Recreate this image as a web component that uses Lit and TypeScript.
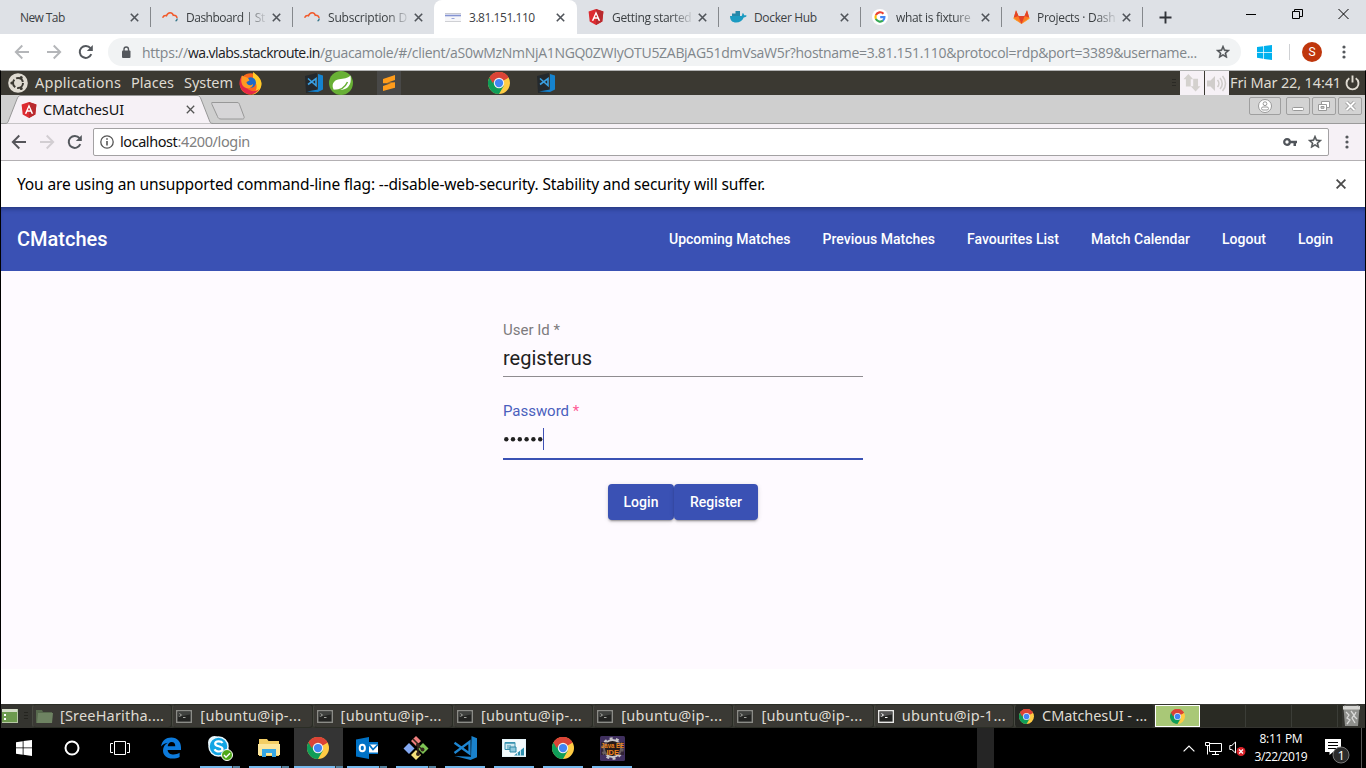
import { LitElement, html, css, svg, nothing } from "lit";
import { customElement, property } from "lit/decorators.js";

/** A single-line label whose tracking is computed so that it spans a given width. */
@customElement("fit-label")
class FitLabel extends LitElement {
  @property({ type: Number }) w = 0;
  static styles = css`
    :host { display: inline-block; white-space: pre; flex: none; }
    .in { display: inline-block; }
  `;
  render() { return html`<span class="in"><slot></slot></span>`; }
  async firstUpdated() {
    await document.fonts.ready;
    const el = this.renderRoot.querySelector(".in") as HTMLElement;
    const n = (this.textContent ?? "").length;
    const natural = el.getBoundingClientRect().width;
    if (this.w && n > 1) {
      el.style.letterSpacing = `${(this.w - natural) / (n - 0.5)}px`;
      this.style.width = `${this.w}px`;
    }
  }
}

const icon = (w: number, h: number, vb: string, body: unknown) =>
  html`<svg class="ic" width=${w} height=${h} viewBox=${vb}>${body}</svg>`;

const close = icon(9, 9, "0 0 9 9", svg`<path d="M.8 .8 8.2 8.2M8.2 .8 .8 8.2" stroke="#50545a" stroke-width="1.6"/>`);
const back = (c: string) => icon(16, 16, "0 0 16 16", svg`<path d="M15 8H2M8.300 1.500 1.800 8l6.500 6.500" fill="none" stroke=${c} stroke-width="1.900"/>`);
const fwd = (c: string) => icon(16, 16, "0 0 16 16", svg`<path d="M1 8h13M7.700 1.500 14.200 8l-6.500 6.500" fill="none" stroke=${c} stroke-width="1.900"/>`);
const reload = icon(16, 16, "0 0 16 16", svg`<path d="M13.300 10.200A6 6 0 1 1 12.500 4.200" fill="none" stroke="#54585d" stroke-width="2"/><path d="M14.800 1v6H8.800z" fill="#54585d"/>`);
const star = icon(16, 16, "0 0 24 24", svg`<path d="M22 9.240l-7.190-.62L12 2 9.190 8.630 2 9.240l5.460 4.730L5.820 21 12 17.270 18.180 21l-1.630-7.030zM12 15.400l-3.760 2.270 1-4.280-3.320-2.880 4.380-.38L12 6.100l1.710 4.040 4.380.38-3.320 2.880 1 4.280z" fill="#4a4d51" stroke="#4a4d51" stroke-width=".7"/>`);
const dots = icon(4, 14, "0 0 4 14", svg`<g fill="#55585c"><circle cx="2" cy="2" r="1.600"/><circle cx="2" cy="7" r="1.600"/><circle cx="2" cy="12" r="1.600"/></g>`);
const chrome = (s: number) => icon(s, s, "0 0 24 24", svg`
  <circle cx="12" cy="12" r="12" fill="#fc4"/>
  <path d="M12 12 1.600 6A12 12 0 0 1 22.400 6z" fill="#db4437"/><path d="M12 6h10.400L12 12z" fill="#db4437"/>
  <path d="M1.600 6A12 12 0 0 0 12 24l5.200-9L12 12z" fill="#0f9d58"/>
  <path d="M1.600 6 6.800 15 12 12 12 6z" fill="#0f9d58"/><path d="M1.600 6A12 12 0 0 1 22.400 6H12L7 9.500 5 11.900z" fill="#db4437"/>
  <circle cx="12" cy="12" r="5.700" fill="#f1f1f1"/><circle cx="12" cy="12" r="4.500" fill="#4285f4"/>`);
const angular = (s: number) => icon(s, s, "0 0 16 16", svg`<path d="M8 0l7.400 2.600-1.100 9.800L8 16l-6.300-3.600L.6 2.600z" fill="#dd2b31"/><path d="M8 0l7.400 2.600-1.100 9.800L8 16z" fill="#b92a2e"/><path d="M8 2.300 3.800 11.800h1.700l.8-2.100h3.400l.8 2.100h1.700zm0 3.100 1.200 2.900H6.800z" fill="#fff"/>`);
const cloud = icon(16, 16, "0 0 16 16", svg`<path d="M.6 8.800C1.600 6.500 3 6.300 4.500 6.800 6 2.500 10.300 3 11.300 6.300c2.300-.3 3.600 1 3.700 2.700" fill="none" stroke="#f1592a" stroke-width="1.500"/><path d="M15.200 9.500c0 1.400-.5 2-1.600 2.500" fill="none" stroke="#37768a" stroke-width="1.400"/>`);
const vscode = (s: number) => icon(s, s, "0 0 24 24", svg`<path d="M18.500 0l5.500 2.300v19L17.500 24 1.500 20l16.500.8z" fill="#1a82cc"/><path d="M1.500 6.800 16.500 17.500V5.800L1.500 17" fill="none" stroke="#1e86d2" stroke-width="2.300"/>`);
const vscodeDark = icon(22, 22, "0 0 22 22", svg`<path d="M2 4 14 1v19L3 21z" fill="#24292d"/><path d="M15 2l5 1.500v14L15 20l-11-.5 11-2z" fill="#1583cf"/><path d="M5 6.500l8 7v-7l-8 6" fill="none" stroke="#3aa0e2" stroke-width="1.600"/>`);
const terminal = (bright = false) => icon(16, 13, "0 0 16 13", svg`<rect x=".7" y=".7" width="14.600" height="11.600" fill="#232422" stroke=${bright ? "#e8e8e6" : "#8b8c87"} stroke-width="1.400"/><path d="M2 7l12-2.500V2H2z" fill=${bright ? "#555" : "#40423f"}/><path d="M3.500 3.500l2 1.500-2 1.500M7 7.500h2.500" fill="none" stroke=${bright ? "#fff" : "#a5a6a1"}/>`);
const docker = icon(17, 16, "0 0 17 16", svg`<path d="M0 7h11.500c1-.2.500-2.200 1.300-3 .9.600 1.300 1.500 1.200 2.300.900-.1 2 0 2.700.500-.5 1.300-1.700 1.700-3 1.700C12.300 12 9.800 13.500 6 13.500 2.500 13.500 0 11.500 0 7z" fill="#1b9ac1"/><path d="M2 4.500h8V7H2zM5.500 2H10v2.500H5.500z" fill="#2487a9"/>`);
const google = icon(16, 16, "0 0 18 18", svg`<circle cx="9" cy="9" r="9" fill="#fff"/><g fill="none" stroke-width="2.400"><path d="M12.900 5.300A5.100 5.100 0 0 0 4.400 7" stroke="#ea4335"/><path d="M4.400 6.900a5.100 5.100 0 0 0 0 4.300" stroke="#fbbc05"/><path d="M4.400 11a5.100 5.100 0 0 0 8 2" stroke="#34a853"/><path d="M12.300 13.100C13.600 12 14.100 10.700 14 9.200H9.200" stroke="#4285f4"/></g>`);
const gitlab = icon(17, 16, "0 0 17 16", svg`<path d="M8.500 15 0.600 9.200 3 1.300 5.500 7h6L14 1.300l2.400 7.900z" fill="#fc7b26"/><path d="M8.500 15 5.300 7h6.400zM.8 8.500 3 1.300 5.500 7zM16.200 8.500 14 1.300 11.500 7z" fill="#e24329"/><path d="M.8 8.500l-.3 1.200L8.500 15zM16.200 8.500l.3 1.200L8.500 15z" fill="#fca326"/>`);
const remote = icon(16, 16, "0 0 16 16", svg`<rect y="4" width="16" height="8" fill="#f6f6f9"/><path d="M0 4.500h16" stroke="#c9cad0"/><path d="M0 6.500h16" stroke="#8493d2" stroke-width="1.600"/><path d="M6.500 9.500h3" stroke="#9aa6d8"/><path d="M0 12.500h16" stroke="#cfd0d4"/>`);

const winLogo = (s: number, c: string) => icon(s, s, "0 0 16 16", svg`<path d="M0 2.200 6.700 1.200v6.300H0zM7.500 1.100 16 0v7.500H7.500zM0 8.300h6.700v6.400L0 13.700zM7.500 8.300H16V16l-8.500-1.200z" fill=${c}/>`);

const tabs = [
  { t: "New Tab", w: 45 },
  { t: "Dashboard | St", w: 79, i: cloud, fade: true },
  { t: "Subscription D", w: 79, i: cloud, fade: true },
  { t: "3.81.151.110", w: 66, i: remote, on: true },
  { t: "Getting started", w: 79.5, i: angular(16), fade: true },
  { t: "Docker Hub", w: 63, i: docker },
  { t: "what is fixture", w: 74.500, i: google, fade: true },
  { t: "Projects · Dash", w: 78.5, i: gitlab, fade: true },
];

const tasks = [
  { t: "[SreeHaritha....", w: 104, i: icon(17, 14, "0 0 17 14", svg`<path d="M0 1h6l1 2h9v11H0z" fill="#57694d"/><path d="M2 4h15l-1 10H1z" fill="#6e8362"/>`) },
  ...[0, 1, 2, 3, 4].map(() => ({ t: "[ubuntu@ip-...", w: 101, i: terminal() })),
  { t: "ubuntu@ip-1...", w: 104, i: terminal(true) },
  { t: "CMatchesUI - ...", w: 105, i: chrome(15), on: true },
];

const outlook = icon(24, 24, "0 0 24 24", svg`<path d="M12 6h11v12H12z" fill="#0072c6"/><path d="M13.500 8.500h9.500v8h-9.500z" fill="#fff"/><path d="M14 8.500l4 5 5-5" fill="none" stroke="#0072c6" stroke-width="1.700"/><path d="M1 3.500 14 1v22L1 20.500z" fill="#0072c6"/><ellipse cx="7.300" cy="12" rx="2.600" ry="3.300" fill="none" stroke="#fff" stroke-width="2"/>`);
const git = icon(26, 26, "0 0 26 26", svg`<path d="M13 1l5 5-5 5-5-5z" fill="#f07f7f"/><path d="M20 8l5.500 5.500L20 19l-5.500-5.500z" fill="#7fc455"/><path d="M6 8l5.500 5.500L6 19 .5 13.500z" fill="#84a9f2"/><path d="M13 15l5 5-5 5-5-5z" fill="#f5e07a"/><path d="M10 4l5 5v11M15 11l5 4" stroke="#35261c" stroke-width="1.600" fill="none"/><circle cx="15" cy="10" r="2" fill="#35261c"/><circle cx="15" cy="19" r="2" fill="#35261c"/><circle cx="19.500" cy="14.500" r="2" fill="#35261c"/>`);
const edge = icon(22, 22, "0 0 22 22", svg`<path d="M1 9.500C2 3.500 6 .5 11.300.5 17.500.5 21 5 21 10.500v2.400H7.600c.3 3.200 2.900 4.500 6 4.500 2.300 0 4.300-.6 6-1.700v4.400c-1.900 1-4.400 1.500-7 1.500C6.500 21.600 3 18 3 13.500c0-3.500 2-6.400 5-7.800C5 6 2.500 7.500 1 9.500zM7.700 9.300h7.600c0-2.700-1.300-4.200-3.700-4.200-2.200 0-3.600 1.700-3.900 4.200z" fill="#0d7bdc"/>`);
const skype = icon(26, 26, "0 0 26 26", svg`<circle cx="7.500" cy="7.500" r="6.500" fill="#e8f7fd"/><circle cx="15" cy="15" r="6.500" fill="#e8f7fd"/><circle cx="11.500" cy="11.500" r="9.500" fill="#12a5e4" stroke="#e8f7fd" stroke-width="1.500"/><path d="M15.500 8c-1.200-2.300-7.300-2.400-7.300.7 0 3.400 7.300 1.600 7.300 5.300 0 3.200-6.500 3.300-7.900.3" fill="none" stroke="#fff" stroke-width="2.200"/><circle cx="20" cy="20" r="5.500" fill="#4ea818" stroke="#fff"/><path d="M17 20l2 2.200 4-4" fill="none" stroke="#fff" stroke-width="1.400"/>`);
const explorer = icon(22, 20, "0 0 22 20", svg`<path d="M1 1h8l1.500 2H21v15H1z" fill="#f3ce64"/><path d="M0 6h22v11H0z" fill="#fce79c"/><path d="M4 19v-8h14v8h-4v-4H8v4z" fill="#37a8e5"/>`);
const rdp = icon(24, 18, "0 0 24 18", svg`<path d="M0 0h24v18H0z" fill="#e4f3f8"/><path d="M1 1h22v16H1z" fill="#f3fafc"/><path d="M3 3.500h10v7H3z" fill="#cfe8f0" stroke="#3a93b0"/><path d="M3 4h10" stroke="#3a93b0" stroke-width="1.500"/><path d="M5 7h4M5 9h3" stroke="#3a93b0"/><path d="M8 8h6v5H8z" fill="#8cc8dc" stroke="#2f88a6"/><path d="M12 16.500 22 8.500v8z" fill="#2f8fae"/><path d="M15.500 13.500v3M18.500 11v6" stroke="#bfe0ea"/>`);
const javaee = icon(25, 25, "0 0 25 25", svg`<rect width="25" height="25" rx="1.500" fill="#40305f"/><circle cx="12.500" cy="12.500" r="8.500" fill="#1d1719" stroke="#c9c6c9" stroke-width="2"/><circle cx="12.500" cy="12.500" r="10" fill="none" stroke="#c9c6c9" stroke-width="2.400" stroke-dasharray="3 3.280"/><rect x="1" y="6" width="23" height="13" fill="#2a1b1b" opacity=".6"/><text x="1" y="11.500" font-size="7" font-weight="700" textLength="23" lengthAdjust="spacingAndGlyphs" font-family="Liberation Sans" fill="#ee861f">Java EE</text><text x="6.500" y="18.500" font-size="7.500" font-weight="700" font-family="Liberation Sans" fill="#ee861f">IDE</text>`);

const apps = [
  { i: edge, n: 0 }, { i: skype, n: 2 }, { i: explorer, n: 2 }, { i: chrome(22), n: 2, on: true },
  { i: outlook, n: 2 }, { i: git, n: 2 }, { i: vscode(24), n: 1 }, { i: rdp, n: 1 }, { i: chrome(22), n: 1 }, { i: javaee, n: 1 },
];

@customElement("app-root")
class AppRoot extends LitElement {
  static styles = css`
    :host { display: flex; flex-direction: column; width: 1366px; height: 768px; overflow: hidden; background: #fff; font-family: "Open Sans", sans-serif; }
    * { box-sizing: border-box; }
    .ic { display: block; flex: none; }
    .row { display: flex; align-items: center; }
    .grow { flex: 1; }
    .s4 { width: 4px; } .s5 { width: 5px; } .s6 { width: 6px; } .s7 { width: 7px; } .s8 { width: 8px; }
    .s10 { width: 10px; } .s11 { width: 11px; } .s16 { width: 16px; } .s20 { width: 20px; } .s24 { width: 24px; }
    .s25 { width: 25px; } .s41 { width: 41px; } .s50 { width: 50px; } .s87 { width: 87px; } .s340 { width: 340px; }
    /* outer browser */
    .tabs { height: 34px; background: #dee1e6; display: flex; padding-left: 9px; flex: none; font-size: 12px; color: #3c4043; }
    .tab { width: 142px; flex: none; height: 34px; display: flex; align-items: center; padding: 0 11px; gap: 8px; border-right: 1px solid transparent; position: relative; }
    .tab:nth-child(n+7) { width: 141px; }
    .tab .g { width: 16px; display: grid; place-items: center; }
    .tab .clip { flex: 1; display: flex; margin-right: -1px; min-width: 0; }
    .tab .fade { -webkit-mask-image: linear-gradient(90deg, #000 74%, rgba(0,0,0,.15) 100%); mask-image: linear-gradient(90deg, #000 74%, rgba(0,0,0,.15) 100%); }
    .sep::after { content: ""; position: absolute; right: -1px; top: 7px; height: 20px; width: 1px; background: #85888c; }
    .tab.on { background: #fff; border-radius: 8px 8px 0 0; width: 143px; margin-left: -1px; }
    .plus { width: 44px; display: grid; place-items: center; }
    .win { display: flex; padding-top: 8px; }
    .win > * { width: 46px; display: flex; justify-content: center; }
    .bar { height: 36px; flex: none; background: #fff; padding-left: 14px; }
    .nav { gap: 16px; padding-right: 14px; }
    .omni { width: 1133px; height: 28px; flex: none; border-radius: 14px; background: #f1f3f4; padding: 0 10px 0 13px; font-size: 14px; color: #80868b; }
    .omni b { font-weight: 400; color: #202124; }
    .omni .lock { margin-right: 11px; }
    .av { width: 20px; height: 20px; border-radius: 50%; background: #bf360c; color: #fff; font: 12px/20px "Roboto", sans-serif; text-align: center; margin: 0 20px 0 12px; }
    .vline { width: 1px; height: 16px; background: #cfd1d4; margin-left: 17px; }
    /* remote desktop */
    .remote { height: 658px; flex: none; border: solid #000; border-width: 0 1px; border-top: 1px solid #b2b3b3; display: flex; flex-direction: column; font-family: "Noto Sans", sans-serif; }
    .gnome { height: 24px; background: #3b3932; color: #dfdbd2; font-size: 14.500px; flex: none; padding-left: 7px; }
    .gnome fit-label { line-height: 22px; padding-bottom: 2px; }
    .tray { width: 24px; height: 24px; background: #f6f1f6; display: grid; place-items: center; margin-right: 1px; }
    .title { height: 29px; background: #cfcfcf; flex: none; display: flex; position: relative; border-bottom: 1px solid #9b9b9b; }
    .title .shape { position: absolute; left: 0; top: 0; }
    .ttl { padding-left: 20px; gap: 6px; z-index: 1; color: #111; font-size: 14.500px; height: 29px; }
    .ttl fit-label { padding-bottom: 2px; }
    .wb { height: 18px; width: 24px; border: 1px solid #9f9f9f; border-radius: 2px; display: grid; place-items: center; margin: 2px 2px 0 0; background: #d3d3d3; }
    .wb.user { width: 32px; margin-right: 5px; }
    .wb.last { margin-right: 3px; }
    .loc { height: 37px; flex: none; background: #f6f1f6; border-bottom: 1px solid #b3b0b3; padding-left: 10px; }
    .inav { gap: 12px; }
    .url { height: 28px; width: 1236px; border: 1px solid #a3a1a3; border-radius: 2px; background: #fff; font-size: 14.500px; color: #808080; padding: 0 5px 0 6px; margin-left: 10px; }
    .url fit-label { padding-bottom: 2px; }
    .url b { color: #111; font-weight: 400; }
    .info { height: 46px; flex: none; background: #fff; padding: 0 19px 0 16px; color: #000; font-size: 15.500px; }
    .app { height: 64px; flex: none; background: #3a51b4; box-shadow: inset 0 4px 4px -2px #26387f; color: #fff; padding: 0 32px 0 16px; font: 500 14px "Roboto", sans-serif; gap: 32px; }
    .brand { font-size: 20px; }
    .page { flex: 1; background: #fefaff; display: flex; flex-direction: column; align-items: center; padding-top: 48px; font-family: "Roboto", sans-serif; box-shadow: inset 0 -35px #fff; }
    .field { width: 360px; display: flex; flex-direction: column; border-bottom: 1px solid #8f8c90; height: 58px; color: #212121; }
    .lab { font-size: 15px; line-height: 22px; color: #7d7a7d; height: 26px; }
    .val { font-size: 20px; line-height: 26px; }
    .field.f2 { margin-top: 23px; height: 60px; border-bottom: 2px solid #3a51b4; }
    .f2 .lab { color: #4a5fbd; }
    .star { color: #ff5c96; }
    .dotsrow { display: flex; height: 23px; padding-left: 1px; margin-top: 1px; align-items: center; }
    .caret { width: 1px; height: 22px; background: #3f51b5; margin-left: -1px; }
    .btns { display: flex; margin-top: 24px; color: #fff; font: 500 14px/36px "Roboto", sans-serif; }
    .btns div { height: 36px; border-radius: 4px; background: #3a51b4; text-align: center; box-shadow: 0 3px 1px -2px rgba(0,0,0,.2), 0 2px 2px rgba(0,0,0,.14), 0 1px 5px rgba(0,0,0,.12); }
    .b1 { width: 66px; }
    .b2 { width: 84px; }
    .panel { height: 24px; flex: none; background: #34342f; display: flex; color: #dfdbd2; font-size: 14.500px; }
    .desk { width: 31px; display: flex; align-items: center; padding-left: 1px; }
    .task { width: 140.300px; height: 24px; border: 1px solid #2a2d25; border-left-color: #484a42; border-radius: 4px; display: flex; align-items: center; padding-left: 2px; background: #3a3934; }
    .task .g { width: 18px; margin-right: 7px; display: grid; place-items: center; }
    .task fit-label { padding-bottom: 2px; }
    .task.on { background: #252622; }
    .ws { width: 45px; height: 22px; margin: 1px 0 0 1px; border: 1px solid #fff; background: #a9c877; display: grid; place-items: center; }
    .w2 { width: 46px; height: 22px; margin-top: 1px; border-right: 1px solid #3b3d37; background: #292a23; }
    .w2.end2 { width: 4px; border: 0; }
    /* windows taskbar */
    .wtask { height: 40px; flex: none; background: #000; display: flex; color: #fff; font-size: 12px; }
    .wtask .c { width: 48px; display: grid; place-items: center; }
    .apps { display: flex; padding-left: 2.500px; }
    .appb { width: 49px; height: 40px; display: flex; flex-direction: column; align-items: center; }
    .appb .pic { flex: 1; display: grid; place-items: center; padding-top: 2px; }
    .appb.on { background: #343434; }
    .ul { height: 2px; width: 40px; display: flex; justify-content: flex-end; }
    .ul.one, .ul.two { background: #76b9ed; }
    .ul.two i { width: 8px; height: 2px; background: #55829f; border-left: 1px solid #333; }
    .appb.on .ul { width: 49px; }
    .clock { display: flex; flex-direction: column; align-items: center; line-height: 18px; padding-top: 2px; width: 54px; }
    .ghost { width: 17px; background: #252525; }
    .end { width: 5px; border-left: 1px solid #555; }
  `;

  render() {
    return html`
      <div class="tabs">
        ${tabs.map((t, k) => html`<div class="tab ${t.on ? "on" : ""} ${[2, 3].includes(k) ? "" : "sep"}">
          ${t.i ? html`<span class="g">${t.i}</span>` : nothing}
          <span class="clip ${t.fade ? "fade" : ""}"><fit-label w=${t.w}>${t.t}</fit-label></span>${close}</div>`)}
        <div class="plus">${icon(13, 13, "0 0 13 13", svg`<path d="M6.500.5v12M.5 6.500h12" stroke="#303338" stroke-width="1.900"/>`)}</div>
        <div class="grow"></div>
        <div class="win">
          <span>${icon(10, 12, "0 0 10 12", svg`<path d="M0 6.500h10" stroke="#000"/>`)}</span>
          <span>${icon(11, 12, "0 0 11 12", svg`<path d="M.5 3.500h7v7h-7zM2.500 3V1.500h8v7H8" fill="none" stroke="#000"/>`)}</span>
          <span>${icon(11, 12, "0 0 11 12", svg`<path d="M.5 1l10 10M10.500 1l-10 10" stroke="#000"/>`)}</span>
        </div>
      </div>
      <div class="bar row">
        <div class="nav row">${back("#b4b6b9")}${fwd("#b4b6b9")}${reload}</div>
        <div class="omni row">
          <span class="lock">${icon(10, 13, "0 0 10 13", svg`<rect x="1" y="4.500" width="8.500" height="7.500" rx="1" fill="#54585d"/><path d="M3 5V3.300a2.250 2.250 0 0 1 4.500 0V5" fill="none" stroke="#54585d" stroke-width="1.400"/>`)}</span>
          <fit-label w="46">https://</fit-label><b><fit-label w="132">wa.vlabs.stackroute.in</fit-label></b><fit-label w="877">/guacamole/#/client/aS0wMzNmNjA1NGQ0ZWIyOTU5ZABjAG51dmVsaW5r?hostname=3.81.151.110&amp;protocol=rdp&amp;port=3389&amp;username...</fit-label>
          <span class="grow"></span>${star}
        </div>
        <span class="grow"></span>${winLogo(15, "#00b1ee")}<span class="vline"></span><span class="av">S</span>${dots}<span class="s20"></span>
      </div>

      <div class="remote">
        <div class="gnome row">
          ${icon(20, 20, "0 0 20 20", svg`<circle cx="10" cy="10" r="9.800" fill="#dfdbd2"/><circle cx="10" cy="10" r="5" fill="none" stroke="#3b3932" stroke-width="2" stroke-dasharray="8.500 2"/><g fill="#3b3932"><circle cx="3.800" cy="10" r="1.500"/><circle cx="13.200" cy="4.600" r="1.500"/><circle cx="13.200" cy="15.400" r="1.500"/></g>`)}
          <span class="s7"></span><fit-label w="86">Applications</fit-label>
          <span class="s10"></span><fit-label w="43">Places</fit-label>
          <span class="s10"></span><fit-label w="49">System</fit-label>
          <span class="s6"></span>
          ${icon(23, 23, "0 0 23 23", svg`<circle cx="11.500" cy="12" r="10.700" fill="#f9681d"/><path d="M14 0c3 2 8 6 8.500 11S19 22 13 22.700C19 19 19 11 14 8z" fill="#ffcb29"/><path d="M3 3.500C0 8-1 14 4 19s13 4 16-2c-3 3-9 3-12-1z" fill="#e52747"/><circle cx="11.700" cy="10.500" r="5.200" fill="#1b69c9"/><path d="M3 3.500c1.500 1.500 4 1 6 2.500l1.500 2.500-3 1.500c0 3 4 4.500 6.500 2 0 4-6 6-9.500 2.500C1.500 11.500 2 6 3 3.500z" fill="#ff9a22"/>`)}
          <span class="s41"></span>${vscodeDark}<span class="s4"></span>
          ${icon(24, 24, "0 0 24 24", svg`<circle cx="12" cy="12" r="12" fill="#68b035"/><path d="M21.500 4.500c.8 5 .3 10.500-4.500 13-4 2-8.500 1.700-12.200 1.300C2 14 4.500 9 10 8.200 15 7.500 18.500 7.500 21.500 4.500z" fill="#fff"/><path d="M5 19.500c6 0 11-3 13.500-8.500" fill="none" stroke="#68b035" stroke-width="1.500"/>`)}
          <span class="s24"></span>
          ${icon(24, 24, "0 0 24 24", svg`<rect width="24" height="24" fill="#484847"/><path d="M6 8l12-4v5l-8 2.700 8-.4v5.400L6 20v-5l8-2.700H6z" fill="#ff9c1b"/>`)}
          <span class="s87"></span>${chrome(22)}<span class="s25"></span>${vscodeDark}
          <span class="grow"></span>
          ${icon(4, 8, "0 0 4 8", svg`<path d="M0 .5h4M0 3.500h4M0 6.500h4" stroke="#2b2a25"/>`)}<span class="s4"></span>
          <span class="tray">${icon(18, 18, "0 0 18 18", svg`<path d="M5.500 0l5 5.500H8V13H3V5.500H.5zM13 18l-5-5.500h2.500V5h5v7.500H18z" fill="#d4d1ce" transform="scale(.97)"/>`)}</span>
          <span class="tray">${icon(20, 17, "0 0 20 17", svg`<path d="M0 5.500h3.500L8 1v15l-4.500-4.500H0z" fill="#d0cdcb"/><path d="M10.500 5c1.800 2 1.800 5 0 7M13 3c3 3.500 3 8 0 11M15.500 1c4 4.500 4 10.500 0 15" fill="none" stroke="#d0cdcb" stroke-width="1.600"/>`)}</span>
          <fit-label w="111">Fri Mar 22, 14:41</fit-label><span class="s4"></span>
          ${icon(15, 16, "0 0 15 16", svg`<path d="M4.300 3.300a6 6 0 1 0 6.400 0M7.500.5v7" fill="none" stroke="#dfdbd2" stroke-width="1.900"/>`)}<span class="s5"></span>
        </div>
        <div class="title">
          <svg class="shape" width="250" height="29"><path d="M0 28.500h4c3 0 3-1.500 4-4L16 4c1-2.500 2-3.500 4-3.500h176c2 0 3 1 4 3.500l8 20.500c1 2.500 1 4 4 4v.5H0z" fill="#f6f1f6" stroke="#979797"/><path d="M211 7.500h25c1.500 0 2 .5 2.500 2l4.500 12c.5 1.500 0 2.500-1.500 2.500H220c-2 0-3-1-3.500-2.500l-5.500-12c-.5-1.500-.5-2 0-2z" fill="#d6d5d7" stroke="#989898"/></svg>
          <div class="ttl row">${angular(16)}<fit-label w="81">CMatchesUI</fit-label><span class="s50"></span>${icon(9, 9, "0 0 9 9", svg`<path d="M.8 .8 8.200 8.200M8.200 .8 .8 8.200" stroke="#555" stroke-width="1.300"/>`)}</div>
          <span class="grow"></span>
          <span class="wb user">${icon(14, 14, "0 0 14 14", svg`<circle cx="7" cy="7" r="6.500" fill="#fff" stroke="#999"/><circle cx="7" cy="4.700" r="1.900" fill="none" stroke="#999"/><rect x="3.500" y="8" width="7" height="3" rx="1.500" fill="none" stroke="#999"/>`)}</span>
          <span class="wb">${icon(14, 12, "0 0 14 12", svg`<rect x="1.500" y="7.500" width="11" height="3" rx="1" fill="#fff" stroke="#999"/>`)}</span>
          <span class="wb">${icon(14, 12, "0 0 14 12", svg`<path d="M4.500 1.500h8v6h-8z" fill="#fff" stroke="#999"/><path d="M1.500 4.500h8v6h-8z" fill="#fff" stroke="#999"/><path d="M4 6.500h3v1.800H4z" fill="#ccc" stroke="#999"/>`)}</span>
          <span class="wb last">${icon(13, 12, "0 0 13 12", svg`<path d="M2.500 2l8 8M10.500 2l-8 8" stroke="#999" stroke-width="3.600"/><path d="M2.500 2l8 8M10.500 2l-8 8" stroke="#fff" stroke-width="1.800"/>`)}</span>
        </div>
        <div class="loc row">
          <div class="row inav">${back("#55555a")}${fwd("#d2ced2")}${reload}</div>
          <div class="url row">
            ${icon(14, 14, "0 0 14 14", svg`<circle cx="7" cy="7" r="6.200" fill="none" stroke="#555" stroke-width="1.300"/><path d="M7 6v4.500M7 3.300v1.500" stroke="#555" stroke-width="1.600"/>`)}
            <span class="s6"></span><b><fit-label w="57.500">localhost</fit-label></b><fit-label w="72.500">:4200/login</fit-label>
            <span class="grow"></span>
            ${icon(14, 8, "0 0 14 8", svg`<circle cx="4" cy="4" r="2.800" fill="none" stroke="#50545a" stroke-width="2.200"/><path d="M7 2.700h7v2.600h-1V8h-2.500V5.300H7z" fill="#50545a"/>`)}
            <span class="s10"></span>${star}
          </div>
          <span class="s16"></span>${dots}
        </div>
        <div class="info row"><fit-label w="748">You are using an unsupported command-line flag: --disable-web-security. Stability and security will suffer.</fit-label><span class="grow"></span>${icon(10, 10, "0 0 10 10", svg`<path d="M.6 .6 9.400 9.400M9.400 .6 .6 9.400" stroke="#4a4a4a" stroke-width="1.800"/>`)}</div>
        <div class="app row">
          <fit-label class="brand" w="90.500">CMatches</fit-label><span class="grow"></span>
          <fit-label w="121.500">Upcoming Matches</fit-label><fit-label w="112.500">Previous Matches</fit-label><fit-label w="92">Favourites List</fit-label><fit-label w="99">Match Calendar</fit-label><fit-label w="44">Logout</fit-label><fit-label w="35">Login</fit-label>
        </div>
        <div class="page">
          <div class="field"><div class="lab"><fit-label w="57">User Id *</fit-label></div><div class="val"><fit-label w="89">registerus</fit-label></div></div>
          <div class="field f2"><div class="lab"><fit-label w="66">Password</fit-label> <span class="star">*</span></div>
            <div class="dotsrow">${icon(40, 10, "0 0 40 10", svg`<g fill="#212121">${[2.3, 9, 15.8, 22.6, 29.4, 36.2].map((x) => svg`<circle cx=${x} cy="5.300" r="2.200"/>`)}</g>`)}<span class="caret"></span></div></div>
          <div class="btns"><div class="b1"><fit-label w="35">Login</fit-label></div><div class="b2"><fit-label w="52">Register</fit-label></div></div>
        </div>
        <div class="panel">
          <span class="desk">${icon(16, 14, "0 0 16 14", svg`<rect width="16" height="14" fill="#6d9a4e"/><path d="M0 0h16v3H0z" fill="#d5ddc9"/><path d="M2 5h2v2H2zM2 9h2v2H2z" fill="#fff"/><path d="M0 13.500h16M15.500 0v14" stroke="#b7c9a5"/>`)}<span class="s6"></span>${icon(4, 8, "0 0 4 8", svg`<path d="M0 .5h4M0 3.500h4M0 6.500h4" stroke="#24241f"/>`)}</span>
          ${tasks.map((t) => html`<div class="task ${(t as any).on ? "on" : ""}"><span class="g">${t.i}</span><fit-label w=${t.w}>${t.t}</fit-label></div>`)}
          <span class="ws">${chrome(15)}</span><span class="w2"></span><span class="w2"></span><span class="w2"></span><span class="w2 end2"></span>
          ${icon(19, 24, "0 0 19 24", svg`<path d="M1.500 4h16l-1.500 18H3z" fill="#8f908c"/><path d="M1 2h17v3.500H1z" fill="#d6d6d3"/><path d="M4 8l3 3-2 3 3 2-3 4M9 7l3 4-2 3 3 5M14 8l-2 4 3 3" fill="none" stroke="#d9d9d7" stroke-width="1.300"/><path d="M2 2l2-1h10l3 1" stroke="#777" fill="none"/>`)}
        </div>
      </div>

      <div class="wtask">
        <span class="c">${winLogo(16, "#fff")}</span>
        <span class="c">${icon(16, 16, "0 0 16 16", svg`<circle cx="8" cy="8" r="6.500" fill="none" stroke="#fff" stroke-width="2"/>`)}</span>
        <span class="c">${icon(20, 14, "0 0 20 14", svg`<path d="M4.500.5h11v13h-11zM3 2.500H.5v9H3M17 2.500h2.500v9H17" fill="none" stroke="#fff"/>`)}</span>
        <div class="apps">${apps.map((a) => html`<div class="appb ${(a as any).on ? "on" : ""}"><span class="pic">${a.i}</span><span class="ul ${["", "one", "two"][a.n]}"><i></i></span></div>`)}</div>
        <span class="s340"></span><span class="ghost"></span><span class="grow"></span>
        <span class="row">
          ${icon(12, 7, "0 0 12 7", svg`<path d="M.6 6.400 6 1l5.400 5.400" fill="none" stroke="#fff" stroke-width="1.200"/>`)}
          <span class="s10"></span>
          ${icon(17, 15, "0 0 17 15", svg`<path d="M4.500 2.500h12v8h-12zM10.500 11v2.500M7 13.500h7M.5 1.500h4v3h-4zM2.500 5v8.500" fill="none" stroke="#fff"/>`)}
          <span class="s7"></span>
          ${icon(18, 17, "0 0 18 17", svg`<path d="M.8 5.500h2L6.500 2v11L2.800 9.500h-2z" fill="none" stroke="#fff"/><circle cx="12" cy="11.500" r="4.500" fill="#da2128"/><path d="M10 9.500l4 4m0-4-4 4" stroke="#fff" stroke-width="1.200"/>`)}
          <span class="s7"></span>
        </span>
        <span class="clock"><fit-label w="43">8:11 PM</fit-label><fit-label w="53">3/22/2019</fit-label></span>
        <span class="row"><span class="s16"></span>
          ${icon(26, 34, "0 0 26 34", svg`<path d="M1 8h16v13H9l-3.500 3V21H1z" fill="#fff"/><path d="M4 11.500h10M4 14.500h10M4 17.500h10" stroke="#000"/><circle cx="17" cy="24" r="8" fill="#2b2b2b" stroke="#777"/><text x="13.500" y="28.500" font-size="13" font-family="Open Sans" fill="#fff">1</text>`)}
          <span class="s11"></span></span>
        <span class="end"></span>
      </div>
    `;
  }
}
